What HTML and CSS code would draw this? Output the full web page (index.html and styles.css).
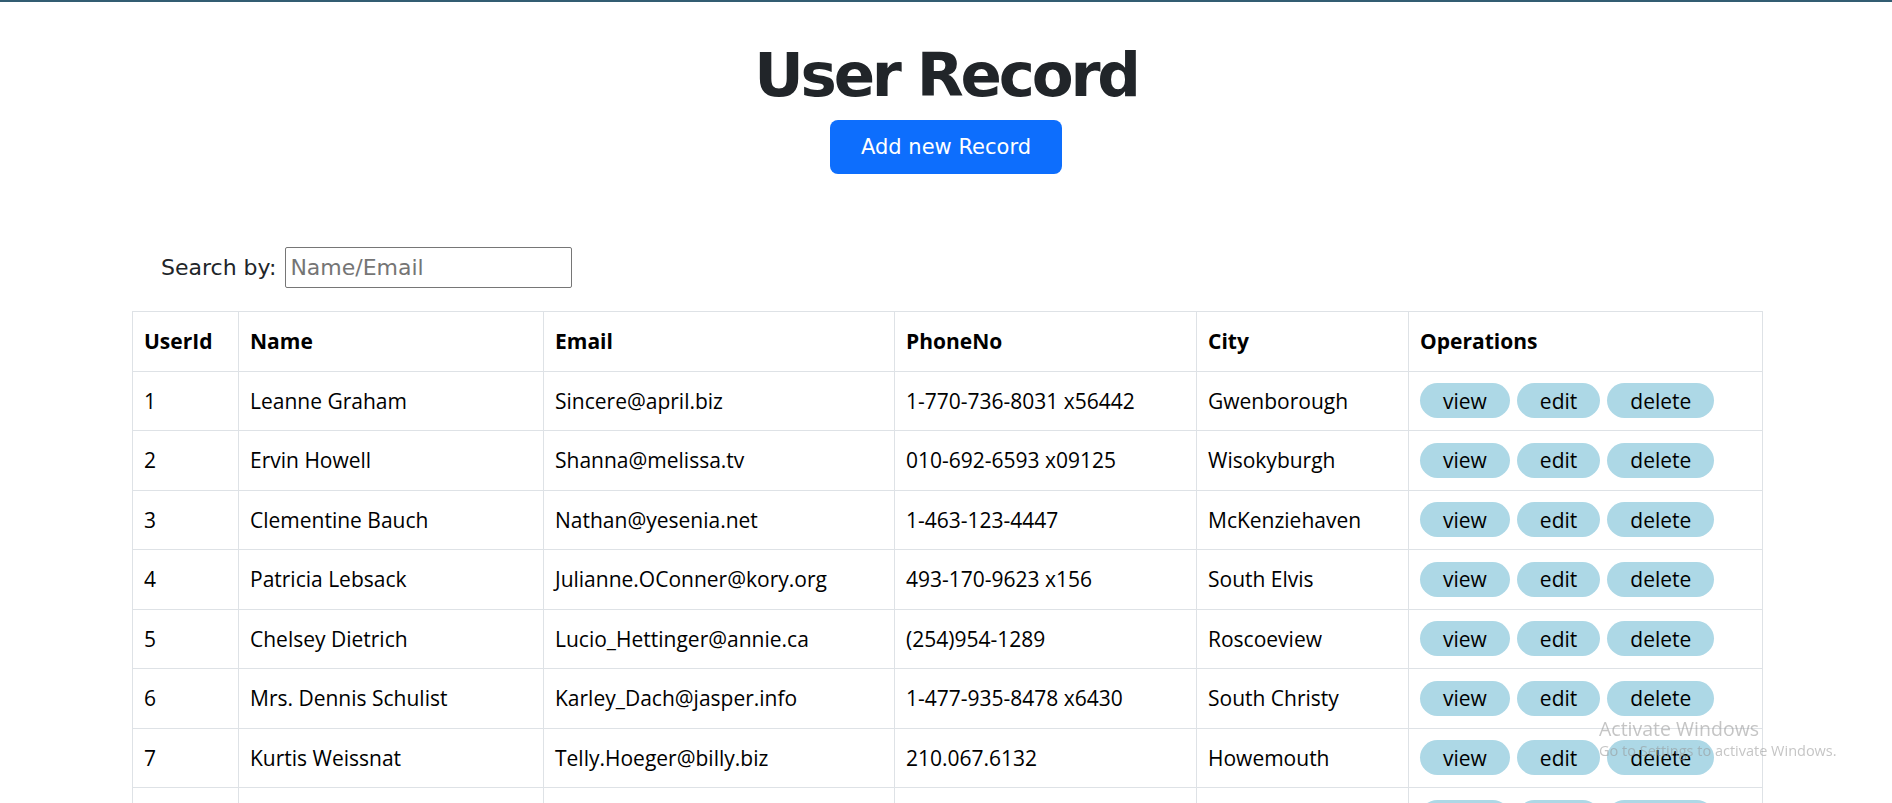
FILE: index.html
```html
<!DOCTYPE html>
<html lang="en">
<head>
<meta charset="utf-8">
<title>User Record</title>
<link rel="stylesheet" href="styles.css">
</head>
<body>
<header class="hero">
  <h1 class="hero-title">User Record</h1>
  <button class="btn-add" type="button">Add new Record</button>
</header>
<main class="content">
  <div class="search">
    <label class="search-label" for="q">Search by:</label>
    <input class="search-input" id="q" type="text" placeholder="Name/Email">
  </div>
  <table class="records">
    <colgroup>
      <col class="c-id"><col class="c-name"><col class="c-email"><col class="c-phone"><col class="c-city"><col class="c-ops">
    </colgroup>
    <thead>
      <tr><th>UserId</th><th>Name</th><th>Email</th><th>PhoneNo</th><th>City</th><th>Operations</th></tr>
    </thead>
    <tbody>
      <tr><td>1</td><td>Leanne Graham</td><td>Sincere@april.biz</td><td>1-770-736-8031 x56442</td><td>Gwenborough</td><td><div class="ops"><button class="op">view</button><button class="op">edit</button><button class="op">delete</button></div></td></tr>
      <tr><td>2</td><td>Ervin Howell</td><td>Shanna@melissa.tv</td><td>010-692-6593 x09125</td><td>Wisokyburgh</td><td><div class="ops"><button class="op">view</button><button class="op">edit</button><button class="op">delete</button></div></td></tr>
      <tr><td>3</td><td>Clementine Bauch</td><td>Nathan@yesenia.net</td><td>1-463-123-4447</td><td>McKenziehaven</td><td><div class="ops"><button class="op">view</button><button class="op">edit</button><button class="op">delete</button></div></td></tr>
      <tr><td>4</td><td>Patricia Lebsack</td><td>Julianne.OConner@kory.org</td><td>493-170-9623 x156</td><td>South Elvis</td><td><div class="ops"><button class="op">view</button><button class="op">edit</button><button class="op">delete</button></div></td></tr>
      <tr><td>5</td><td>Chelsey Dietrich</td><td>Lucio_Hettinger@annie.ca</td><td>(254)954-1289</td><td>Roscoeview</td><td><div class="ops"><button class="op">view</button><button class="op">edit</button><button class="op">delete</button></div></td></tr>
      <tr><td>6</td><td>Mrs. Dennis Schulist</td><td>Karley_Dach@jasper.info</td><td>1-477-935-8478 x6430</td><td>South Christy</td><td><div class="ops"><button class="op">view</button><button class="op">edit</button><button class="op">delete</button></div></td></tr>
      <tr><td>7</td><td>Kurtis Weissnat</td><td>Telly.Hoeger@billy.biz</td><td>210.067.6132</td><td>Howemouth</td><td><div class="ops"><button class="op">view</button><button class="op">edit</button><button class="op">delete</button></div></td></tr>
      <tr><td>8</td><td>Nicholas Runolfsdottir V</td><td>Sherwood@rosamond.me</td><td>586.493.6943 x140</td><td>Aliyaview</td><td><div class="ops"><button class="op">view</button><button class="op">edit</button><button class="op">delete</button></div></td></tr>
      <tr><td>9</td><td>Glenna Reichert</td><td>Chaim_McDermott@dana.io</td><td>(775)976-6794 x41206</td><td>Bartholomebury</td><td><div class="ops"><button class="op">view</button><button class="op">edit</button><button class="op">delete</button></div></td></tr>
      <tr><td>10</td><td>Clementina DuBuque</td><td>Rey.Padberg@karina.biz</td><td>024-648-3804</td><td>Lebsackbury</td><td><div class="ops"><button class="op">view</button><button class="op">edit</button><button class="op">delete</button></div></td></tr>
    </tbody>
  </table>
</main>
<div class="watermark">
  <div class="wm-title">Activate Windows</div>
  <div class="wm-sub">Go to Settings to activate Windows.</div>
</div>
</body>
</html>
```
FILE: styles.css
```css
* { box-sizing: border-box; }
html, body { margin: 0; padding: 0; }
body {
  border-top: 2px solid #325d72;
  background: #fff;
  color: #212529;
  font-family: "Open Sans", "Noto Sans", sans-serif;
}
.hero {
  display: flex;
  flex-direction: column;
  align-items: center;
  padding-top: 37px;
}
.hero-title {
  margin: 0;
  font-family: "DejaVu Sans", sans-serif;
  font-weight: 700;
  font-size: 61px;
  letter-spacing: -3.2px;
  line-height: 72px;
  color: #212529;
}
.btn-add {
  margin-top: 9px;
  height: 54px;
  width: 232px;
  padding: 0;
  border: none;
  border-radius: 8px;
  background: #0d6efd;
  color: #fff;
  font-family: "DejaVu Sans", sans-serif;
  font-size: 21px;
  cursor: pointer;
}
.content {
  padding: 73px 130px 0 132px;
}
.search {
  display: flex;
  align-items: center;
  gap: 9px;
  padding-left: 29px;
  height: 41px;
}
.search-label {
  font-family: "DejaVu Sans", sans-serif;
  font-size: 22px;
  font-weight: 400;
  color: #212529;
}
.search-input {
  width: 287px;
  height: 41px;
  border: 1px solid #767676;
  border-radius: 2px;
  padding: 0 4px;
  font-family: "DejaVu Sans", sans-serif;
  font-size: 22px;
}
.search-input::placeholder { color: #757575; }
.records {
  margin-top: 23px;
  width: 1630px;
  border-collapse: collapse;
  table-layout: fixed;
  font-family: "Open Sans", sans-serif;
  font-size: 21px;
  color: #000;
}
.c-id { width: 106px; }
.c-name { width: 305px; }
.c-email { width: 351px; }
.c-phone { width: 302px; }
.c-city { width: 212px; }
.c-ops { width: 354px; }
.records th, .records td {
  border: 1px solid #dee2e6;
  padding: 0 11px;
  height: 59.5px;
  text-align: left;
  vertical-align: middle;
  white-space: nowrap;
}
.records th { font-weight: 700; }
.ops { display: flex; gap: 7px; }
.op {
  height: 35px;
  padding: 0 23px;
  border: none;
  border-radius: 18px;
  background: #add8e6;
  color: #000;
  font-family: "Open Sans", sans-serif;
  font-size: 21px;
  cursor: pointer;
}
.watermark {
  position: fixed;
  left: 1599px;
  top: 716px;
  color: rgba(150, 150, 150, 0.55);
  font-family: "Open Sans", sans-serif;
  pointer-events: none;
}
.wm-title { font-size: 19.5px; line-height: 25px; }
.wm-sub { font-size: 14.5px; line-height: 20px; }
```
